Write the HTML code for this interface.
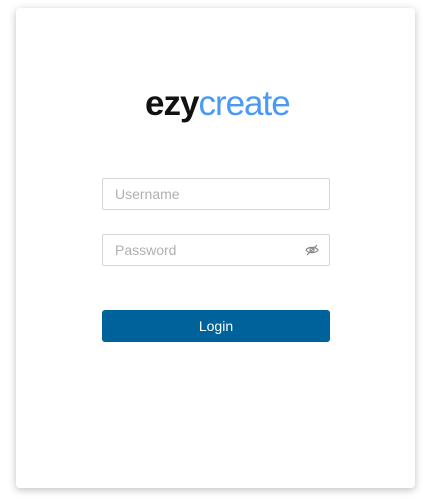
<!DOCTYPE html>
<html><head><style>
body{margin:0;width:423px;height:499px;background:#fff;font-family:"Liberation Sans",sans-serif;position:relative;overflow:hidden}
.card{position:absolute;left:16px;top:8px;width:399px;height:480px;background:#fff;border-radius:4px;box-shadow:0 2px 8px rgba(0,0,0,.25)}
.logo{position:absolute;left:145px;top:84px;font-size:35px;font-weight:bold;letter-spacing:-1px;line-height:40px}
.logo .a{color:#111}.logo .b{color:#4a9af5;font-weight:normal}
.in{position:absolute;left:102px;width:226px;height:30px;border:1px solid #d6d6d6;border-radius:2px;color:#b0b0b0;font-size:14px;line-height:30px;padding-left:12px;box-sizing:content-box;width:214px}
.btn{position:absolute;left:102px;top:310px;width:228px;height:32px;background:#00629b;border-radius:3px;color:#fff;font-size:14px;text-align:center;line-height:32px}
</style></head><body>
<div class="card"></div>
<div class="logo"><span class="a">ezy</span><span class="b">create</span></div>
<div class="in" style="top:178px">Username</div>
<div class="in" style="top:234px">Password
<svg style="position:absolute;right:10px;top:8px" width="14" height="14" viewBox="0 0 14 14" fill="none" stroke="#888" stroke-width="1.2"><path d="M1 7C3 3.5 11 3.5 13 7C11 10.5 3 10.5 1 7Z"/><circle cx="7" cy="7" r="2"/><path d="M2 12L12 2"/></svg></div>
<div class="btn">Login</div>
</body></html>
